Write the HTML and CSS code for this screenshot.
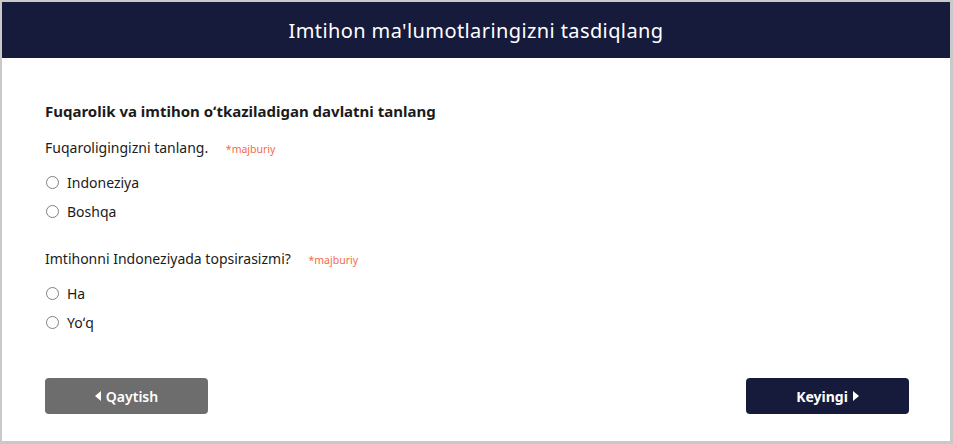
FILE: index.html
```html
<!DOCTYPE html>
<html lang="uz">
<head>
  <meta charset="UTF-8">
  <title>Imtihon ma'lumotlaringizni tasdiqlang</title>
  <link rel="stylesheet" href="styles.css">
</head>
<body>
  <div class="frame">
    <header class="top-bar">
      <h1>Imtihon ma'lumotlaringizni tasdiqlang</h1>
    </header>

    <main class="content">
      <h2 class="section-title">Fuqarolik va imtihon oʻtkaziladigan davlatni tanlang</h2>

      <div class="question">
        <p class="question-label">Fuqaroligingizni tanlang. <span class="required">*majburiy</span></p>
        <label class="option"><input type="radio" name="citizen"> Indoneziya</label>
        <label class="option"><input type="radio" name="citizen"> Boshqa</label>
      </div>

      <div class="question">
        <p class="question-label">Imtihonni Indoneziyada topsirasizmi? <span class="required">*majburiy</span></p>
        <label class="option"><input type="radio" name="place"> Ha</label>
        <label class="option"><input type="radio" name="place"> Yoʻq</label>
      </div>

      <div class="actions">
        <button class="btn btn-back">
          <svg width="6" height="10" viewBox="0 0 6 10"><path d="M6 0 L0 5 L6 10 Z" fill="#fff"/></svg>
          Qaytish
        </button>
        <button class="btn btn-next">
          Keyingi
          <svg width="6" height="10" viewBox="0 0 6 10"><path d="M0 0 L6 5 L0 10 Z" fill="#fff"/></svg>
        </button>
      </div>
    </main>
  </div>
</body>
</html>
```

FILE: styles.css
```css
html, body {
  margin: 0;
  height: 100%;
}

body {
  font-family: "Noto Sans", "Open Sans", sans-serif;
  background: #c9c9c9;
  padding: 2px 3px 3px 2px;
  box-sizing: border-box;
}

.frame {
  background: #fff;
  height: 100%;
  display: flex;
  flex-direction: column;
}

.top-bar {
  background: #161a3b;
  height: 56px;
  display: flex;
  align-items: center;
  justify-content: center;
}

.top-bar h1 {
  margin: 0;
  color: #fff;
  font-size: 20px;
  font-weight: 400;
  letter-spacing: 0.4px;
}

.content {
  padding: 0 41px 0 43px;
  color: #1b1b1b;
}

.section-title {
  margin: 42px 0 0;
  font-size: 15px;
  font-weight: 700;
  line-height: 22px;
}

.question {
  display: flex;
  flex-direction: column;
}

.question-label {
  margin: 16px 0 9px;
  font-size: 14px;
  line-height: 19px;
}

.question + .question .question-label {
  margin-top: 23px;
}

.required {
  color: #f26b4a;
  font-size: 10.5px;
  margin-left: 14px;
}

.option {
  display: flex;
  align-items: center;
  gap: 8px;
  font-size: 14px;
  height: 29px;
  margin-left: 1px;
}

.option input {
  appearance: none;
  margin: 0;
  width: 13px;
  height: 13px;
  border: 1px solid #808080;
  border-radius: 50%;
  background: #fff;
}

.actions {
  display: flex;
  justify-content: space-between;
  margin-top: 41px;
}

.btn {
  width: 163px;
  height: 36px;
  border: none;
  border-radius: 4px;
  color: #fff;
  font-family: inherit;
  font-size: 14px;
  font-weight: 600;
  display: flex;
  align-items: center;
  justify-content: center;
  gap: 5px;
  cursor: pointer;
}

.btn-back {
  background: #6d6d6d;
}

.btn-next {
  background: #161a3b;
  font-weight: 700;
}
```
